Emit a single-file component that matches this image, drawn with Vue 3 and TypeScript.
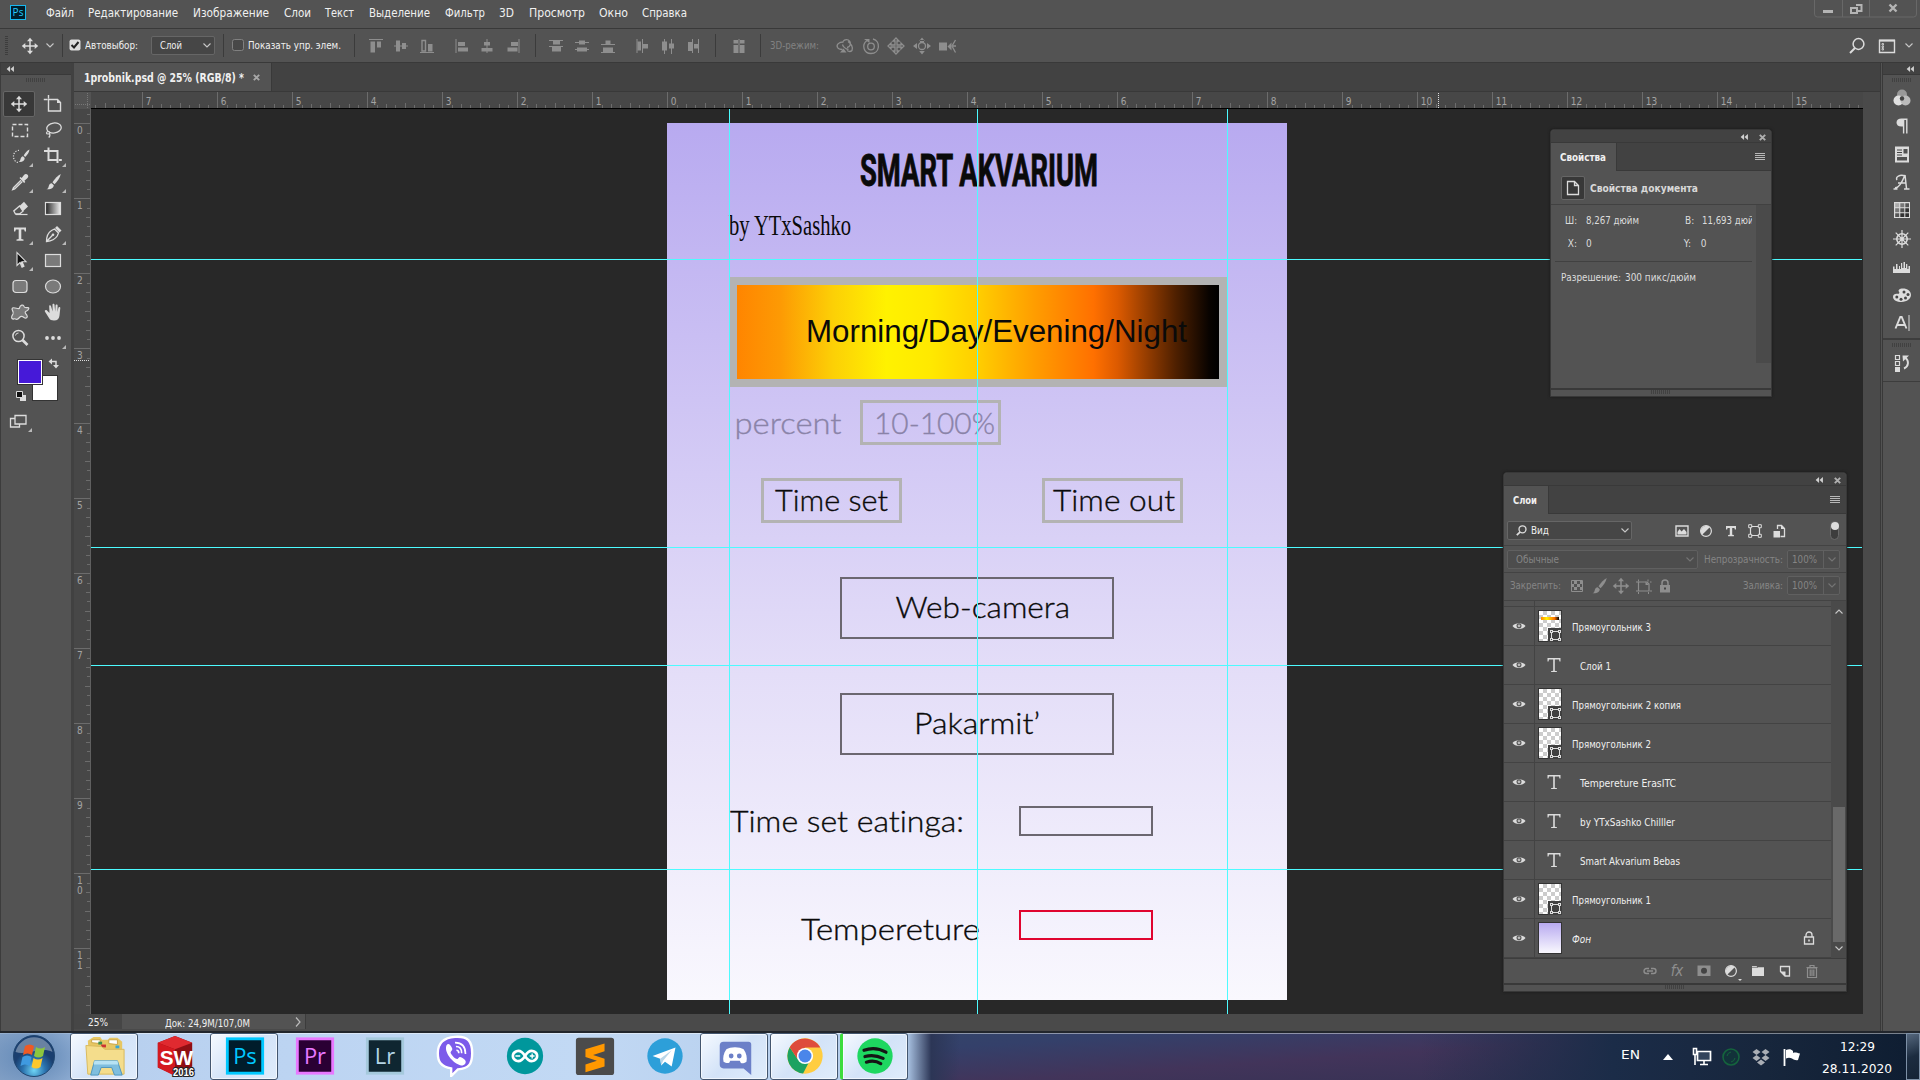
<script setup lang="ts">
interface Item { t: string; w: number; g: number }
interface Layer { name: string; kind: 'shape' | 'text' | 'back'; w: number; band?: boolean }

// Squeezes or stretches a label to a given width in px.
const vFit = {
  mounted(el: HTMLElement, b: { value: number }) {
    const natural = el.getBoundingClientRect().width
    if (!natural) return
    el.style.transform = `scaleX(${b.value / natural})`
    el.style.marginRight = `${b.value - natural}px`
  },
}

const menu: Item[] = [
  { t: 'Файл', w: 28, g: 20 }, { t: 'Редактирование', w: 90, g: 14 }, { t: 'Изображение', w: 76, g: 15 },
  { t: 'Слои', w: 27, g: 15 }, { t: 'Текст', w: 29, g: 14 }, { t: 'Выделение', w: 61, g: 15 },
  { t: 'Фильтр', w: 40, g: 15 }, { t: '3D', w: 15, g: 14 }, { t: 'Просмотр', w: 56, g: 15 },
  { t: 'Окно', w: 29, g: 14 }, { t: 'Справка', w: 45, g: 14 },
]

const L = '#dcdcdc'
const G = '#8e8e8e'
const shapeBox = (c: string) =>
  `<path d="M5.5 5.5h9v9h-9z" fill="none" stroke="${c}" stroke-width="1.2"/><path d="M3.7 3.7h3v3h-3zM13.3 3.7h3v3h-3zM3.7 13.3h3v3h-3zM13.3 13.3h3v3h-3z" fill="#535353" stroke="${c}"/>`
const move = (c: string) =>
  `<path d="M10 3v14M3 10h14" stroke="${c}" stroke-width="1.5"/><path d="M10 1.8L7 5.3h6zM10 18.2L7 14.7h6zM1.8 10L5.3 7v6zM18.2 10L14.7 7v6z" fill="${c}"/>`
const brush = (c: string) =>
  `<path d="M17.8 2c-3 1.600-6.500 5.200-8.300 8.300l2 2C14.400 9.600 17 5.600 17.800 2z" fill="${c}"/><path d="M8.700 11.200l2.100 2.100c-.3 3-3.800 4.600-7.300 3.900 1.800-.8 1.900-1.600 2.300-3.300.3-1.500 1.500-2.700 2.900-2.700z" fill="${c}"/>`
const serifT = (c: string) =>
  `<path d="M4 3.500h12v4h-1.200l-.7-2.100h-2.800v9.600l2.200.5v1.200h-7v-1.200l2.200-.5V5.400H5.900l-.7 2.100H4z" fill="${c}"/>`
const fx3 = (d: string) => `<path d="${d}" fill="none" stroke="${G}" stroke-width="1.3"/>`

const icons: Record<string, string> = {
  move: move(L),
  moveGrey: move(G),
  artboard: `<path d="M5.500 5.500h9l3 3v8.500H5.500zM4.500 5.500H.8M5.500 4.500V1" fill="none" stroke="${L}" stroke-width="1.400"/><path d="M14 5v4h4z" fill="${L}"/>`,
  marquee: `<rect x="2.500" y="4.500" width="15" height="12" fill="none" stroke="${L}" stroke-width="1.400" stroke-dasharray="4 2"/>`,
  lasso: `<ellipse cx="11" cy="8" rx="7.300" ry="5" fill="none" stroke="${L}" stroke-width="1.300" transform="rotate(-8 11 8)"/><path d="M5 11.500c-2 .5-2 2.500 0 2.500s2.500-2 .500-2.500M6.500 13.500c.8 1.500.3 3-.8 4" fill="none" stroke="${L}" stroke-width="1.200"/>`,
  quick: `<path d="M9 4.500a5 6 0 1 0-1 12" fill="none" stroke="${L}" stroke-width="1.200" stroke-dasharray="1.200 1.400"/><path d="M19.500 3.500c-2.500 1-4.500 3.500-5.800 6l1.500 1.500c2.300-2 4-4.800 4.300-7.500zM13 10.300l1.700 1.700c0 2.800-2.700 4.500-6 4 1.600-.8 1.500-1.900 2-3.400.4-1.300 1.200-2.300 2.300-2.300z" fill="${L}"/>`,
  crop: `<path d="M5.500 1.500v12.500H15M1 5h13.500v12" fill="none" stroke="${L}" stroke-width="2"/><path d="M15.800 13h3v2h-3z" fill="${L}"/>`,
  dropper: `<path d="M11 8.200l-7.500 7.500-.8 2 2-.8L12.300 9.500" fill="none" stroke="${L}" stroke-width="1.300"/><path d="M9.500 6l1-1 1.200 1 2.300-3c1.200-1.300 2.800-1 3.600-.2s1 2.400-.3 3.500l-2.900 2.400.9 1.200-1.200 1.200z" fill="${L}"/>`,
  brush: brush(L),
  brushGrey: brush(G),
  eraser: `<path d="M9.500 8L14 3.800l4 4.700-5 4.700z" fill="${L}"/><path d="M9.500 8l-5.700 5 1.700 3h4l3.500-2.800z" fill="none" stroke="${L}" stroke-width="1.300"/><path d="M6 16.500h11.500" stroke="${L}" stroke-width="1.200"/>`,
  gradient: `<defs><linearGradient id="tg"><stop stop-color="#222"/><stop offset="1" stop-color="#eee"/></linearGradient></defs><rect x="2.500" y="4.500" width="15" height="12" fill="url(#tg)" stroke="${L}" stroke-width="1.200"/>`,
  type: serifT(L),
  pen: `<path d="M3.500 17.500c0-5 1-8.500 5-11l3-1.500 4 4-1.300 3c-2.500 4-5.700 5-10.700 5.500zM4 17l5.500-5.800" fill="none" stroke="${L}" stroke-width="1.300"/><circle cx="10" cy="10.800" r="1.300" fill="${L}"/><path d="M12 4l2-2 4.500 4.500-2 2z" fill="${L}"/>`,
  arrow: `<path d="M7 2.500v13l3-3 2 4.800 2-1-2-4.600h4z" fill="#111" stroke="${L}" stroke-width="1.100"/><path d="M10.200 12.500l2 4.800 2-1-2-4.600z" fill="${L}"/>`,
  rect: `<rect x="2.500" y="4.500" width="15" height="12" fill="#7a7a7a" stroke="${L}" stroke-width="1.200"/>`,
  round: `<rect x="3" y="4.500" width="14" height="12" rx="3" fill="#7a7a7a" stroke="${L}" stroke-width="1.200"/>`,
  ellipse: `<ellipse cx="10" cy="10.500" rx="7.500" ry="6.500" fill="#7a7a7a" stroke="${L}" stroke-width="1.200"/>`,
  blob: `<path d="M9.500 6c.5-3 4-4 4.500-1.500.3 1.600 2 1.200 4 1 1.500 0 .8 2.500-1.500 3.500-2.500 1-1 2.500.500 4.500 1 2-1 3.500-3 2s-3-1.800-4.500 0-2.500 2.500-4 1.500-2 1-3.500-.5c-1-1.500 0-3 1-4.500C4.500 9.500.500 7.500 2.500 6c2-1.200 6.500 2 7 0z" fill="#7a7a7a" stroke="${L}" stroke-width="1.200"/>`,
  hand: `<path d="M6.500 11L4 8.500c-1.300-1-2.800 0-2 1.200l4 6.300c1 1.800 2.500 2.500 5 2.500 3.500 0 5.300-2 5.500-5l.8-7.500c0-1.300-1.600-1.400-1.900-.2L14.500 10l.1-6.500c0-1.300-1.900-1.300-2 0L12.200 9.500 11.500 2.800c-.1-1.400-2-1.300-2 0l.1 6.700L8 4c-.4-1.300-2.100-.9-1.800.4z" fill="${L}"/>`,
  zoom: `<circle cx="8.500" cy="8" r="5.600" fill="none" stroke="${L}" stroke-width="1.500"/><path d="M5.500 7.500a3 3 0 0 1 3-2.500" fill="none" stroke="${L}"/><path d="M12.500 12l5 5" stroke="${L}" stroke-width="2.600"/>`,
  dots: `<circle cx="4" cy="10" r="1.900" fill="${L}"/><circle cx="10" cy="10" r="1.900" fill="${L}"/><circle cx="16" cy="10" r="1.900" fill="${L}"/>`,
  screen: `<path d="M2.500 7.500h9v8.500h-9z" fill="none" stroke="${L}" stroke-width="1.300"/><path d="M7 4.500h11v8.500H7z" fill="#535353" stroke="${L}" stroke-width="1.300"/>`,
  aTop: `<path d="M3 3.500h14" stroke="${G}"/><path d="M4.500 5.500h4.500v11H4.500zM11 5.500h4v6h-4z" fill="${G}"/>`,
  aMid: `<path d="M3 10h14" stroke="${G}"/><path d="M5 4.500h4v11H5zM11 7h4v6h-4z" fill="${G}"/>`,
  aBot: `<path d="M3 16.500h14" stroke="${G}"/><path d="M5 4.500h3.500V15H5z" fill="none" stroke="${G}" stroke-width="1.400"/><path d="M11 8h4.500v7.500H11z" fill="${G}"/>`,
  aLeft: `<path d="M4 3v14" stroke="${G}"/><path d="M6 6h7v4H6zM6 11.500h10v4H6z" fill="${G}"/>`,
  aCen: `<path d="M10 3v14" stroke="${G}"/><path d="M7 6h6v3.500H7zM4.500 12h11v3.500h-11z" fill="${G}"/>`,
  aRight: `<path d="M16 3v14" stroke="${G}"/><path d="M8 6h7v4H8zM4.500 11.500h10v4h-10z" fill="${G}"/>`,
  dTop: `<path d="M3 4.500h14M3 10.500h14" stroke="${G}"/><path d="M7 5h7v3.500H7zM6 11h9v4.500H6z" fill="${G}"/>`,
  dMid: `<path d="M3 6.500h14M3 13.500h14" stroke="${G}"/><path d="M7 4.500h6V8.500H7zM5 11.500h10v4H5z" fill="${G}"/>`,
  dBot: `<path d="M3 8.500h14M3 16.500h14" stroke="${G}"/><path d="M7.500 4.500h5v4h-5zM5 11.500h10V16H5z" fill="${G}"/>`,
  dLeft: `<path d="M5 3v14M10.500 3v14" stroke="${G}"/><path d="M5.500 5.500h3.500v9H5.500zM11 8h5v4.500h-5z" fill="${G}"/>`,
  dCen: `<path d="M6.500 3v15M13.500 3v15" stroke="${G}"/><path d="M4 5.500h5v9H4zM11 7.500h5v5h-5z" fill="${G}"/>`,
  dRight: `<path d="M9.500 3v14M15.500 3v14" stroke="${G}"/><path d="M5 6h4v9H5zM11 8h4v4.500h-4z" fill="${G}"/>`,
  auto: `<path d="M10 3v14" stroke="${G}"/><path d="M4.500 4H9v3.500H4.500zM11 4h4.500v3.500H11zM4.500 9H9v8H4.500zM11 9h4.500v8H11z" fill="${G}"/>`,
  o3: fx3('M8 5.500a4 4 0 1 1 4 6M8.500 6C4 6 1 8.500 2.500 11.500c1 1.800 3 2 5 2M13 5.500c3 2 5.500 6 4 9-1.500 1.500-3.500 1-5 0M7.500 8.500c.5 2 3 4.500 6 5') + `<path d="M5 16.500l3.500-4 3 4z" fill="${G}"/>`,
  roll: fx3('M6 4.500C0 9 3 17.500 10 17.500c9 0 10-12.500 2-14.500') + `<circle cx="10" cy="10.500" r="3.300" fill="none" stroke="${G}" stroke-width="1.300"/><path d="M3 3h5.500v4z" fill="${G}"/>`,
  pan: fx3('M10 2l3 3h-2v4h4V7l3 3-3 3v-2h-4v4h2l-3 3-3-3h2v-4H5v2l-3-3 3-3v2h4V5H7z'),
  slide: `<circle cx="10" cy="10" r="3.500" fill="none" stroke="${G}" stroke-width="1.300"/><path d="M10 1.500L7.200 5h5.600zM8 4h4v2.500H8zM10 18.500L7.200 15h5.600zM1 10l4-3v6zM19 10l-4-3v6z" fill="${G}"/>`,
  cam: `<path d="M2 6.500h8v8H2zM10.500 10.500l4-4v8z" fill="${G}"/>` + fx3('M18.500 4l-3.500 6 3.500 6.500M16 10h3'),
  search: `<circle cx="11.500" cy="8" r="5.400" fill="none" stroke="${L}" stroke-width="1.500"/><path d="M8 12l-5 5" stroke="${L}" stroke-width="2"/>`,
  work: `<path d="M2.500 4.500h15v12h-15z" fill="none" stroke="${L}" stroke-width="1.400"/><path d="M2 3.500h16v2H2z" fill="${L}"/><path d="M5 7.500h1.500v1.500H5zM5 10h1.500v1.500H5zM5 12.500h1.500v1.500H5z" fill="none" stroke="${L}" stroke-width=".8"/>`,
  spheres: `<circle cx="10" cy="6.500" r="5" fill="#999"/><circle cx="6.500" cy="12.500" r="5" fill="#e0e0e0"/><circle cx="13.500" cy="12.500" r="5" fill="#bbb"/><circle cx="10" cy="10.500" r="2.200" fill="#444"/>`,
  para: `<path d="M9.500 2.500H15.500V17.500h-1.400V4h-1.800v13.500h-1.400v-7C6.500 11 4.500 9 4.500 6.500s2-4 5-4z" fill="${L}"/>`,
  news: `<path d="M3 2.500h14v16H3z" fill="${L}"/><path d="M5 6h5M5 8.500h5M5 11h5" stroke="#444"/><path d="M11.500 5h4v4.500h-4zM5 13h10v3.500H5z" fill="#535353"/>`,
  scriptA: `<path d="M3 15.500c3 1 7-5 10-12.500l1.500 13.500M13 4C8 2 3 5 5 8M6 11h8M1.500 17h4M12 17h5.500" fill="none" stroke="${L}" stroke-width="1.500"/>`,
  swatches: `<path d="M2 2h16v16H2z" fill="${L}"/><path d="M3.200 3.200h4v4h-4z" fill="#aaa"/><path d="M8.300 3.200h4v4h-4zM3.200 8.300h4v4h-4z" fill="#777"/><path d="M13.300 3.200h3.700v4h-3.700zM8.300 8.300h4v4h-4zM3.200 13.300h4v3.700h-4z" fill="#555"/><path d="M13.300 8.300h3.700v4h-3.700zM8.300 13.300h4v3.700h-4zM13.300 13.300h3.700v3.700h-3.700z" fill="#333"/>`,
  wheel: `<circle cx="10" cy="10" r="5.200" fill="none" stroke="${L}" stroke-width="1.600"/><circle cx="10" cy="10" r="1.800" fill="${L}"/><path d="M10 1v18M1 10h18M3.700 3.700l12.600 12.600M16.300 3.700L3.700 16.300" stroke="${L}" stroke-width="1.200"/>`,
  histo: `<path d="M1 16V9.500h1.500V12H4V7h1.500v5H7V9h1v3h1V6h1.200v5h1.300V5H13v6h1V7h1.300v5h1.200V9H18v7z" fill="${L}"/>`,
  palette: `<path d="M10.500 3.500C15 3.300 19 6 19 9.800S15 17 9.500 17C5 17 1 15 1 12c0-2.500 2-3.500 4.500-3.200 2 .2 2.300-1 1.300-2.300-1-1.500 1-2.900 3.700-3z" fill="${L}"/><g fill="#444"><circle cx="4.800" cy="12" r="1.500"/><circle cx="9" cy="14.200" r="1.500"/><circle cx="13.500" cy="13" r="1.500"/><circle cx="16" cy="9.500" r="1.500"/><circle cx="12" cy="7" r="1.500"/></g>`,
  charA: `<path d="M3.500 15.500L8.300 4h1.400l4.800 11.500M5.500 12h7" fill="none" stroke="${L}" stroke-width="1.900"/><path d="M17 2v16" stroke="${L}"/>`,
  history: `<path d="M3.500 2.500h4v4h-4zM3.500 8.500h4v4h-4z" fill="none" stroke="${L}" stroke-width="1.200"/><path d="M3 14h5v5H3z" fill="${L}"/><path d="M12 15.500c5-2 5-8 1.500-10.500" fill="none" stroke="${L}" stroke-width="1.900"/><path d="M10.500 2.500H17L11 8.500z" fill="${L}"/>`,
  doc: `<path d="M4.500 3.500h7l4 4v9h-11zM11.500 3.500v4h4" fill="none" stroke="${L}" stroke-width="1.300"/>`,
  eye: `<path d="M3.500 10C6 6.200 14 6.200 16.500 10 14 13.800 6 13.800 3.500 10z" fill="${L}"/><circle cx="10" cy="9.800" r="2.500" fill="#535353"/><circle cx="10" cy="9.800" r="1.400" fill="#bbb"/>`,
  pic: `<path d="M4 5h12v10H4z" fill="none" stroke="${L}" stroke-width="1.400"/><path d="M5.500 13.500V11l2-3 2 2.500L12 8l2.500 3v2.500z" fill="${L}"/>`,
  adjust: `<circle cx="10" cy="10" r="5.400" fill="none" stroke="${L}" stroke-width="1.200"/><path d="M13.800 6.200A5.400 5.400 0 0 0 6.200 13.800z" fill="${L}"/>`,
  smallT: `<path d="M5 5h10v3.500h-1.200l-.4-1.500h-2.200v6.800l1.700.3v1.200H7.100v-1.200l1.700-.3V7H6.600l-.4 1.500H5z" fill="${L}"/>`,
  shape: shapeBox(L),
  smart: `<path d="M8.500 8V4.500h4l3 3v8h-4" fill="none" stroke="${L}" stroke-width="1.300"/><path d="M12 4v4h4zM4.500 10h6.500v6.500H4.500z" fill="${L}"/>`,
  checker: `<path d="M4.500 4.500h11v11h-11z" fill="none" stroke="${G}"/><path d="M7 5h3v3H7zM13 5h2.500v3H13zM4.500 8H7v3H4.500zM10 8h3v3h-3zM7 11h3v3H7zM13 11h2.500v3H13z" fill="${G}"/>`,
  frame: `<path d="M5.500 6h8.500l2 2v7H5.500z" fill="none" stroke="${G}" stroke-width="1.200"/><path d="M3 6h2M5.500 3.500v2M15 3.500v2M17 15h2M3 15h2M5.500 16v2M15.500 16v2M17 6h1.500" stroke="${G}"/><path d="M12.500 5.500v3.500H16z" fill="${G}"/>`,
  lock: `<path d="M5 9h10v7.500H5z" fill="${G}"/><path d="M7 9V7a3 3 0 0 1 6 0v2" fill="none" stroke="${G}" stroke-width="1.500"/><path d="M9 11.500h2v2H9z" fill="#444"/>`,
  lockLine: `<path d="M5.500 9h9v7h-9z" fill="none" stroke="${L}" stroke-width="1.300"/><path d="M7 9V7a3 3 0 0 1 6 0v2" fill="none" stroke="${L}" stroke-width="1.300"/><path d="M9.200 11.500h1.600v2H9.200z" fill="${L}"/>`,
  link: `<path d="M9 7.500H6.500a2.500 2.500 0 0 0 0 5H9M11 7.500h2.500a2.500 2.500 0 0 1 0 5H11M7 10h6" fill="none" stroke="${G}" stroke-width="1.400"/>`,
  mask: `<path d="M3.500 4.500h13v10.500h-13z" fill="${G}"/><circle cx="10" cy="9.700" r="3" fill="#444"/>`,
  folder: `<path d="M4 5h4.500l1 1.200H16V15H4z" fill="${L}"/><path d="M4 6.300h6" stroke="#535353" stroke-width=".7"/>`,
  newLayer: `<path d="M5.500 5.500h9v9.500H10L5.500 10.500z" fill="none" stroke="${L}" stroke-width="1.300"/><path d="M5 10.500h5.500V15.500z" fill="${L}"/>`,
  trash: `<path d="M5.500 7h9v9.500h-9zM4.500 6.500h11M8 6V4.500h4V6M8.200 8.500v6.500M10 8.500v6.500M11.800 8.500v6.500" fill="none" stroke="${G}" stroke-width="1.200"/>`,
}

const alignGroups: string[][] = [['aTop', 'aMid', 'aBot'], ['aLeft', 'aCen', 'aRight']]
const distGroups: string[][] = [['dTop', 'dMid', 'dBot'], ['dLeft', 'dCen', 'dRight']]
const modes = ['o3', 'roll', 'pan', 'slide', 'cam']
const tools: [string, boolean][] = [
  ['move', false], ['artboard', false], ['marquee', false], ['lasso', false], ['quick', true], ['crop', true],
  ['dropper', true], ['brush', true], ['eraser', false], ['gradient', false], ['type', true], ['pen', true],
  ['arrow', true], ['rect', false], ['round', false], ['ellipse', false], ['blob', false], ['hand', false],
  ['zoom', false], ['dots', true],
]
const dock = ['spheres', 'para', 'news', 'scriptA', 'swatches', 'wheel', 'histo', 'palette', 'charA']

// Rulers: one inch is 75 px at 25% zoom, with eighth-inch ticks.
const originX = 593.3
const originY = 15.300
const hTicks: { x: number; h: number }[] = []
for (let i = -63; i < 130; i++) {
  const x = originX + i * 9.375
  if (x > 17 && x < 1788) hTicks.push({ x: Math.round(x), h: i % 8 === 0 ? 16 : i % 4 === 0 ? 5 : i % 2 === 0 ? 4 : 3 })
}
const hLabels = Array.from({ length: 23 }, (_, i) => i - 7).map((n) => ({ n: Math.abs(n), x: originX + n * 75 + 3.5 }))
const vTicks: { y: number; h: number }[] = []
for (let i = -1; i < 96; i++) {
  const y = originY + i * 9.375
  if (y < 905) vTicks.push({ y: Math.round(y), h: i % 8 === 0 ? 16 : i % 4 === 0 ? 5 : i % 2 === 0 ? 4 : 3 })
}
const vLabels = Array.from({ length: 12 }, (_, n) => ({ d: String(n).split(''), y: originY + n * 75 }))

const guidesX = [638, 886, 1136]
const guidesY = [150, 438, 556, 760]
const texts = [
  { t: 'percent', x: 643.5, y: 325, w: 107, c: '#8a83a8' },
  { t: '10-100%', x: 783, y: 325, w: 121, c: '#8a83a8' },
  { t: 'Time set', x: 684, y: 401.5, w: 113, c: '#0a0a0a' },
  { t: 'Time out', x: 962, y: 401.5, w: 122, c: '#0a0a0a' },
  { t: 'Web-camera', x: 804.5, y: 509, w: 174.5, c: '#0a0a0a' },
  { t: 'Pakarmit’', x: 823, y: 625, w: 126, c: '#0a0a0a' },
  { t: 'Time set eatinga:', x: 639, y: 722.5, w: 234, c: '#0a0a0a' },
  { t: 'Tempereture', x: 710, y: 830.5, w: 179, c: '#0a0a0a' },
]
const boxes = [
  { x: 770.5, y: 292.500, w: 138, h: 42, c: '#b3b3b3', s: 3 },
  { x: 671.5, y: 370.500, w: 138, h: 42, c: '#b3b3b3', s: 3 },
  { x: 952.5, y: 370.500, w: 138, h: 42, c: '#b3b3b3', s: 3 },
  { x: 750, y: 469, w: 272, h: 60, c: '#6b6770', s: 2 },
  { x: 750, y: 585, w: 272, h: 60, c: '#6b6770', s: 2 },
  { x: 929, y: 698, w: 132, h: 28, c: '#6b6770', s: 2 },
  { x: 929, y: 802, w: 132, h: 28, c: '#e0052f', s: 2 },
]

const layers: Layer[] = [
  { name: 'Прямоугольник 3', kind: 'shape', w: 79, band: true },
  { name: 'Слой 1', kind: 'text', w: 31 },
  { name: 'Прямоугольник 2 копия', kind: 'shape', w: 109 },
  { name: 'Прямоугольник 2', kind: 'shape', w: 79 },
  { name: 'Tempereture ErasITC', kind: 'text', w: 96 },
  { name: 'by YTxSashko Chilller', kind: 'text', w: 95 },
  { name: 'Smart Akvarium Bebas', kind: 'text', w: 100 },
  { name: 'Прямоугольник 1', kind: 'shape', w: 79 },
  { name: 'Фон', kind: 'back', w: 19 },
]
const filters = ['pic', 'adjust', 'smallT', 'shape', 'smart']
const locks = ['checker', 'brushGrey', 'moveGrey', 'frame', 'lock']

const sq = (bg: string, edge: string) =>
  `<rect x="5.500" y="4" width="37" height="36" fill="${bg}" stroke="${edge}" stroke-width="3"/>`
const apps: { svg: string; label?: string; color?: string; open?: boolean; play?: boolean }[] = [
  { open: true, svg: '<path d="M6 6l6-4h7l2 3h6l2-2h8l5 4v28H8z" fill="#e7c763"/><path d="M10 8V5h9v4zM28 9V5h9v5z" fill="#fff" stroke="#c9a545"/><path d="M17 7h4v3h-4z" fill="#3b8f4b"/><path d="M20 10h5v3h-5z" fill="#c33"/><path d="M35 11h4v3h-4z" fill="#37a6d8"/><path d="M4 11l16 1 4 3h20v26H6z" fill="#f4dd8c" stroke="#d8b95b"/><path d="M9 42l4-15h24l5 15h-8l-3-8H20l-3 8z" fill="#7fbede" stroke="#4c94bd"/><path d="M13 27h24l1 4H12z" fill="#b7e2f3"/>' },
  { svg: '<path d="M6 8L24 1l18 7v25L26 43 6 34z" fill="#8f0f14"/><path d="M6 8L24 1l18 7-18 7z" fill="#e02a30"/><path d="M24 15v28L6 34V8z" fill="#d41920"/><text x="8" y="31" font-size="22" font-weight="700" fill="#fff" font-family="Liberation Sans" textLength="35" lengthAdjust="spacingAndGlyphs">SW</text><text x="22" y="43" font-size="10.5" font-weight="700" fill="#fff" stroke="#222" stroke-width="2.500" paint-order="stroke" font-family="Liberation Sans" textLength="22" lengthAdjust="spacingAndGlyphs">2016</text>' },
  { open: true, svg: sq('#001d2b', '#00c8ff'), label: 'Ps', color: '#00c8ff' },
  { svg: sq('#2a0034', '#e878ff'), label: 'Pr', color: '#e878ff' },
  { svg: sq('#0f2631', '#a5c9dc'), label: 'Lr', color: '#b4d5e6' },
  { svg: '<path d="M24 2C38 1 42 7 42 19S38 35 27 36l-7 7v-8C9 33 6 28 6 19S10 3 24 2z" fill="#7c5bea" stroke="#fff" stroke-width="2.500"/><path d="M15 11c2-3 4-1 6 3 1 3-3 3-1 6s5 6 7 5c2-3 3-2 6 0 4 3 2 6-1 7C24 32 12 19 15 11z" fill="#fff"/><path d="M24 8c8 0 11 5 11 12M25 12c5 0 6 4 6 7M25.500 16c2 0 2.500 1 2.500 3" fill="none" stroke="#fff" stroke-width="1.700"/>' },
  { svg: '<circle cx="24" cy="22" r="19" fill="#00979c"/><path d="M24 22c-3-5-6-6-9-5-5 2-5 8 0 10 3 1 6 0 9-5 3-5 6-6 9-5 5 2 5 8 0 10-3 1-6 0-9-5z" fill="none" stroke="#fff" stroke-width="2.700"/><path d="M14 22h5M29 22h5M31.500 19.500v5" stroke="#fff" stroke-width="1.400"/>' },
  { svg: '<rect x="4" y="3" width="40" height="39" rx="3" fill="#4b4b4b"/><path d="M34 9v8l-12 4 12 4v8L14 39v-8l12-4-12-4v-8z" fill="#ff9800"/>' },
  { svg: '<circle cx="24" cy="22" r="18.500" fill="#2d9fd9"/><path d="M11 22l24-9-4 20-7-5-4 4-1-7z" fill="#fff"/><path d="M19 25l12-9-9 11-2 5z" fill="#b9d6e8"/>' },
  { open: true, svg: '<path d="M12 7h26q3 0 3 3v32l-8-7H12q-4 0-4-4V11q0-4 4-4z" fill="#6c80c8"/><path d="M15 15c4-3 14-3 18 0 3 4 4 9 3 13-3 2-5 2-6 1l-1-2H19l-1 2c-2 1-4 0-6-1-1-4 0-9 3-13z" fill="#fff"/><circle cx="20" cy="22" r="2.500" fill="#6c80c8"/><circle cx="28.500" cy="22" r="2.500" fill="#6c80c8"/>' },
  { open: true, svg: '<circle cx="24" cy="22" r="18.500" fill="#ffcd40"/><path d="M8 12.800A18.500 18.500 0 0 0 22 40.400l8-15.400-6-3-8 3z" fill="#1ca261"/><path d="M24 13h16A18.500 18.500 0 0 0 8 12.800L16 25z" fill="#de4b3c"/><circle cx="24" cy="22" r="8.500" fill="#fff"/><circle cx="24" cy="22" r="6.800" fill="#4a86ea"/>' },
  { open: true, play: true, svg: '<circle cx="24" cy="22" r="18.500" fill="#1ed760"/><path d="M12.500 16c8-3 16-2 23 2M13.500 22.500c7-2 13-1 19 2M15 28.500c6-2 11-1 15 1.500" fill="none" stroke="#151515" stroke-width="3.400" stroke-linecap="round"/>' },
]
</script>

<template>
  <div class="screen">
    <header class="menubar">
      <div class="pslogo"><span>Ps</span></div>
      <span v-for="m in menu" :key="m.t" v-fit="m.w" class="fit" :style="{ marginLeft: m.g + 'px' }">{{ m.t }}</span>
      <div class="winbtns">
        <svg width="104" height="19" viewBox="0 0 104 19">
          <path d="M.5 0v15q0 3 3 3h96q3 0 3-3V0M28.500 0v18M55.500 0v18" fill="none" stroke="#686868" />
          <path d="M9 11h10v3H9z" fill="#b4b4b4" />
          <path d="M42 6h5.500v6H44M37 9h6v5h-6z" fill="none" stroke="#b4b4b4" stroke-width="2" />
          <path d="M75.500 5.500l7 7M82.500 5.500l-7 7" stroke="#b4b4b4" stroke-width="2.400" />
        </svg>
      </div>
    </header>

    <div class="options">
      <i class="vgrip"></i>
      <svg class="ic opmove" viewBox="0 0 20 20" v-html="icons.move"></svg>
      <svg class="chev opchev" viewBox="0 0 8 5"><path d="M.5.500L4 4 7.500.500" /></svg>
      <i class="sep s1"></i>
      <svg class="chk on" viewBox="0 0 12 12"><rect x=".5" y=".5" width="11" height="11" rx="2" fill="#dcdcdc" /><path d="M2.500 6l2.500 2.500L9.500 3" fill="none" stroke="#222" stroke-width="2" /></svg>
      <span v-fit="53" class="fit auto">Автовыбор:</span>
      <div class="drop opdrop"><span v-fit="22" class="fit">Слой</span><svg class="chev" viewBox="0 0 8 5"><path d="M.5.500L4 4 7.500.500" /></svg></div>
      <i class="sep s2"></i>
      <svg class="chk off" viewBox="0 0 12 12"><rect x=".5" y=".5" width="11" height="11" rx="2" fill="#484848" stroke="#808080" /></svg>
      <span v-fit="93" class="fit show">Показать упр. элем.</span>
      <i class="sep s3"></i>
      <div v-for="(g, i) in alignGroups" :key="'a' + i" class="group"><div v-for="n in g" :key="n" class="slot"><svg class="ic" viewBox="0 0 20 20" v-html="icons[n]"></svg></div></div>
      <i class="sep s4"></i>
      <div v-for="(g, i) in distGroups" :key="'d' + i" class="group"><div v-for="n in g" :key="n" class="slot"><svg class="ic" viewBox="0 0 20 20" v-html="icons[n]"></svg></div></div>
      <i class="sep s5"></i>
      <svg class="ic opauto" viewBox="0 0 20 20" v-html="icons.auto"></svg>
      <i class="sep s6"></i>
      <span v-fit="49" class="fit mode">3D-режим:</span>
      <div class="group modes"><div v-for="n in modes" :key="n" class="slot"><svg class="ic" viewBox="0 0 20 20" v-html="icons[n]"></svg></div></div>
      <div class="opright">
        <svg class="ic" viewBox="0 0 20 20" v-html="icons.search"></svg>
        <svg class="ic" viewBox="0 0 20 20" v-html="icons.work"></svg>
        <svg class="chev" viewBox="0 0 8 5"><path d="M.5.500L4 4 7.500.500" /></svg>
      </div>
    </div>

    <main class="main">
      <aside class="toolbox">
        <div class="colhead"><svg class="dbl" viewBox="0 0 9 7"><path d="M4 0v7L0 3.500zM8.500 0v7l-4-3.500z" /></svg></div>
        <i class="grip"></i>
        <div class="tools">
          <div v-for="([n, sub], i) in tools" :key="n" class="tool" :class="{ active: i === 0 }">
            <svg class="ic" viewBox="0 0 20 20" v-html="icons[n]"></svg><b v-if="sub" class="sub"></b>
          </div>
        </div>
        <svg class="colors" width="70" height="52" viewBox="0 0 70 52">
          <rect x="31.500" y="17.500" width="25" height="25" fill="#fff" stroke="#333" />
          <rect x="16.500" y="1.500" width="25" height="25" fill="#fff" stroke="#333" />
          <rect x="18" y="3" width="22" height="22" fill="#4619d8" />
          <path d="M50 3.500h5v5" fill="none" stroke="#dcdcdc" stroke-width="1.500" /><path d="M51 .5v6l-3.500-3zM52 7h6l-3 3.500z" fill="#dcdcdc" />
          <path d="M19 37h6v6h-6z" fill="#dcdcdc" /><path d="M15.500 33.500h6v6h-6z" fill="#111" stroke="#dcdcdc" />
        </svg>
        <div class="tool scr"><svg class="ic" viewBox="0 0 20 20" v-html="icons.screen"></svg><b class="sub"></b></div>
      </aside>

      <section class="docarea">
        <div class="tabs">
          <div class="tab"><span v-fit="160" class="fit">1probnik.psd @ 25% (RGB/8) *</span><svg width="7" height="7" viewBox="0 0 7 7"><path d="M.8.800l5.400 5.400M6.200.800L.8 6.200" stroke="#a8a8a8" stroke-width="1.900" /></svg></div>
        </div>
        <div class="view">
          <div class="viewmain">
            <svg class="hruler" width="1789" height="17" viewBox="0 0 1789 17">
              <rect width="17" height="17" fill="#535353" />
              <path d="M13.500 1v15M1 12.500h15" stroke="#777" stroke-dasharray="1 1" />
              <path v-for="t in hTicks" :key="t.x" :d="`M${t.x + 0.5} 16v-${t.h}`" stroke="#6c6c6c" />
              <text v-for="l in hLabels" :key="l.x" :x="l.x" y="12.500" class="rt">{{ l.n }}</text>
              <path d="M1364.500 1v15" stroke="#ddd" stroke-dasharray="1 1" />
              <path d="M17 16.500h1772" stroke="#000" />
            </svg>
            <div class="viewrow">
              <svg class="vruler" width="17" height="905" viewBox="0 0 17 905">
                <path v-for="t in vTicks" :key="t.y" :d="`M16 ${t.y - 0.5}h-${t.h}`" stroke="#6c6c6c" />
                <g v-for="l in vLabels" :key="l.y">
                  <text v-for="(d, k) in l.d" :key="k" x="3" :y="l.y + 10 + k * 10" class="rt">{{ d }}</text>
                </g>
                <path d="M0 251.500h16" stroke="#ddd" stroke-dasharray="1 1" />
                <path d="M16.500 0v905" stroke="#5f5f5f" />
              </svg>
              <svg class="canvas" width="1772" height="905" viewBox="0 0 1772 905">
                <defs>
                  <linearGradient id="paper" x2="0" y2="1"><stop stop-color="#b8aaf0" /><stop offset=".4" stop-color="#d4cbf5" /><stop offset=".63" stop-color="#e4def8" /><stop offset="1" stop-color="#f9f8fe" /></linearGradient>
                  <linearGradient id="day"><stop stop-color="#ff8500" /><stop offset=".09" stop-color="#fd9a04" /><stop offset=".2" stop-color="#fcd006" /><stop offset=".31" stop-color="#fff200" /><stop offset=".4" stop-color="#ffe900" /><stop offset=".5" stop-color="#ffce00" /><stop offset=".62" stop-color="#ff9c00" /><stop offset=".74" stop-color="#ff7000" /><stop offset=".79" stop-color="#dc5a00" /><stop offset=".91" stop-color="#4f2000" /><stop offset=".98" stop-color="#080300" /><stop offset="1" stop-color="#000" /></linearGradient>
                </defs>
                <rect width="1772" height="905" fill="#282828" />
                <rect x="576" y="14" width="620" height="877" fill="url(#paper)" />
                <rect x="639" y="168" width="497" height="110" fill="#b3b3b3" />
                <rect x="646" y="176" width="482" height="94" fill="url(#day)" />
                <rect v-for="(b, i) in boxes" :key="i" :x="b.x" :y="b.y" :width="b.w" :height="b.h" fill="none" :stroke="b.c" :stroke-width="b.s" />
                <text class="title" x="769" y="76.500" textLength="238" lengthAdjust="spacingAndGlyphs">SMART AKVARIUM</text>
                <text class="hand" x="638" y="125.500" textLength="122" lengthAdjust="spacingAndGlyphs">by YTxSashko</text>
                <text class="arial" x="715" y="233" textLength="381" lengthAdjust="spacingAndGlyphs">Morning/Day/Evening/Night</text>
                <text v-for="t in texts" :key="t.t" class="eras" :x="t.x" :y="t.y" :fill="t.c" :stroke="t.c" :textLength="t.w" lengthAdjust="spacingAndGlyphs">{{ t.t }}</text>
                <path v-for="g in guidesX" :key="g" :d="`M${g + 0.5} 0v905`" stroke="#4dfbff" />
                <path v-for="g in guidesY" :key="g" :d="`M0 ${g + 0.5}h1771`" stroke="#4dfbff" />
              </svg>
            </div>
          </div>
          <div class="vscroll"></div>
        </div>
        <div class="status">
          <div class="zoomval"><span v-fit="20" class="fit">25%</span></div>
          <div class="docsize"><span v-fit="85" class="fit">Док: 24,9М/107,0М</span><svg width="6" height="10" viewBox="0 0 6 10"><path d="M1 .5L5 5 1 9.500" fill="none" stroke="#bbb" stroke-width="1.200" /></svg></div>
        </div>
      </section>

      <aside class="dock">
        <div class="colhead right"><svg class="dbl" viewBox="0 0 9 7"><path d="M4 0v7L0 3.500zM8.500 0v7l-4-3.500z" /></svg></div>
        <i class="grip"></i>
        <div class="dockicons"><div v-for="n in dock" :key="n"><svg class="ic" viewBox="0 0 20 20" v-html="icons[n]"></svg></div></div>
        <div class="dock2"><i class="grip"></i><svg class="ic" viewBox="0 0 20 20" v-html="icons.history"></svg></div>
      </aside>
    </main>

    <section class="panel props">
      <div class="phead"><svg class="dbl" viewBox="0 0 9 7"><path d="M4 0v7L0 3.500zM8.500 0v7l-4-3.500z" /></svg><svg class="px" viewBox="0 0 7 7"><path d="M.8.800l5.400 5.400M6.200.800L.8 6.200" /></svg></div>
      <div class="ptabs"><div class="ptab pt1"><span v-fit="46" class="fit">Свойства</span></div><svg class="burger" viewBox="0 0 10 8"><path d="M0 .5h10M0 2.500h10M0 4.500h10M0 6.500h10" /></svg></div>
      <div class="pdoc"><div class="pbtn"><svg class="ic" viewBox="0 0 20 20" v-html="icons.doc"></svg></div><span v-fit="108" class="fit strong">Свойства документа</span></div>
      <div class="pbody">
        <div class="pmain">
          <div class="prow"><span class="k"><span v-fit="12" class="fit">Ш:</span></span><span v-fit="53" class="fit">8,267 дюйм</span><span class="k2">В:</span><span class="cut"><span v-fit="58" class="fit">11,693 дюйм</span></span></div>
          <div class="prow"><span class="k">X:</span><span>0</span><span class="k2 y">Y:</span><span>0</span></div>
          <div class="pres"><span v-fit="60" class="fit">Разрешение:</span><span v-fit="71" class="fit res">300 пикс/дюйм</span></div>
        </div>
        <div class="pscroll"></div>
      </div>
      <div class="pfoot"><i class="grip"></i></div>
    </section>

    <section class="panel layers">
      <div class="phead"><svg class="dbl" viewBox="0 0 9 7"><path d="M4 0v7L0 3.500zM8.500 0v7l-4-3.500z" /></svg><svg class="px" viewBox="0 0 7 7"><path d="M.8.800l5.400 5.400M6.200.800L.8 6.200" /></svg></div>
      <div class="ptabs"><div class="ptab pt2"><span v-fit="24" class="fit">Слои</span></div><svg class="burger" viewBox="0 0 10 8"><path d="M0 .5h10M0 2.500h10M0 4.500h10M0 6.500h10" /></svg></div>
      <div class="lrow filter">
        <div class="drop kind"><svg width="11" height="11" viewBox="0 0 11 11"><circle cx="6.500" cy="4.300" r="3.500" fill="none" stroke="#dcdcdc" stroke-width="1.300" /><path d="M4.200 6.800L.8 10.200" stroke="#dcdcdc" stroke-width="1.700" /></svg><span v-fit="18" class="fit">Вид</span><svg class="chev" viewBox="0 0 8 5"><path d="M.5.500L4 4 7.500.500" /></svg></div>
        <div class="ficons"><svg v-for="n in filters" :key="n" class="ic" viewBox="0 0 20 20" v-html="icons[n]"></svg></div>
        <div class="toggle"><i></i></div>
      </div>
      <div class="lrow blend dim">
        <div class="drop normal"><span v-fit="43" class="fit">Обычные</span><svg class="chev" viewBox="0 0 8 5"><path d="M.5.500L4 4 7.500.500" /></svg></div>
        <span v-fit="79" class="fit op">Непрозрачность:</span>
        <div class="drop pct"><span v-fit="25" class="fit">100%</span><i></i><svg class="chev" viewBox="0 0 8 5"><path d="M.5.500L4 4 7.500.500" /></svg></div>
      </div>
      <div class="lrow locks dim">
        <span v-fit="51" class="fit">Закрепить:</span>
        <div class="licons"><svg v-for="n in locks" :key="n" class="ic" viewBox="0 0 20 20" v-html="icons[n]"></svg></div>
        <span v-fit="40" class="fit fill">Заливка:</span>
        <div class="drop pct"><span v-fit="25" class="fit">100%</span><i></i><svg class="chev" viewBox="0 0 8 5"><path d="M.5.500L4 4 7.500.500" /></svg></div>
      </div>
      <div class="list">
        <div class="rows">
          <div class="layer stub"><div class="eye"></div></div>
          <div v-for="l in layers" :key="l.name" class="layer">
            <div class="eye"><svg class="ic" viewBox="0 0 20 20" v-html="icons.eye"></svg></div>
            <svg v-if="l.kind === 'text'" class="tthumb" viewBox="0 0 20 20"><path d="M3.500 3h13v3.500h-1l-.5-1.900h-4.200v11.200l2.200.4v.9h-6v-.9l2.200-.4V4.600H5L4.500 6.500h-1z" fill="#dcdcdc" /></svg>
            <div v-else class="thumb" :class="l.kind">
              <i v-if="l.band" class="band"></i>
              <svg v-if="l.kind === 'shape'" class="badge" viewBox="0 0 14 14"><rect width="14" height="14" fill="#404040" /><path d="M3.500 3.500h8v8h-8z" fill="none" stroke="#dcdcdc" /><path d="M2 2h3v3H2zM10 2h3v3h-3zM2 10h3v3H2zM10 10h3v3h-3z" fill="#dcdcdc" /><path d="M3 3h1v1H3zM11 3h1v1h-1zM3 11h1v1H3zM11 11h1v1h-1z" fill="#404040" /></svg>
            </div>
            <span v-fit="l.w" class="fit lname" :class="l.kind">{{ l.name }}</span>
            <svg v-if="l.kind === 'back'" class="ic llock" viewBox="0 0 20 20" v-html="icons.lockLine"></svg>
          </div>
        </div>
        <div class="lscroll">
          <svg class="chev" viewBox="0 0 8 5"><path d="M.5 4.500L4 1l3.500 3.500" /></svg>
          <i></i>
          <svg class="chev" viewBox="0 0 8 5"><path d="M.5.500L4 4 7.500.500" /></svg>
        </div>
      </div>
      <div class="lfoot">
        <svg class="ic" viewBox="0 0 20 20" v-html="icons.link"></svg>
        <span class="fx">fx</span>
        <svg class="ic" viewBox="0 0 20 20" v-html="icons.mask"></svg>
        <svg class="ic adj" viewBox="0 0 20 20"><g v-html="icons.adjust"></g><path d="M17 18h4l-2 2z" fill="#dcdcdc" /></svg>
        <svg class="ic" viewBox="0 0 20 20" v-html="icons.folder"></svg>
        <svg class="ic" viewBox="0 0 20 20" v-html="icons.newLayer"></svg>
        <svg class="ic" viewBox="0 0 20 20" v-html="icons.trash"></svg>
      </div>
      <div class="pfoot"><i class="grip"></i></div>
    </section>

    <footer class="taskbar">
      <div class="start">
        <svg width="46" height="46" viewBox="0 0 46 46">
          <defs><radialGradient id="orb" cy=".85"><stop stop-color="#6fd4f5" /><stop offset=".55" stop-color="#2a72ae" /><stop offset="1" stop-color="#1a3f70" /></radialGradient></defs>
          <circle cx="23" cy="23" r="20.500" fill="url(#orb)" stroke="#20456f" />
          <path d="M4.500 19a19 19 0 0 1 37 0C30 13 16 23 4.500 19z" fill="#fff" opacity=".35" />
          <path d="M14 13c3-2 6-2 9 0l-2 9c-3-2-6-2-9 0z" fill="#ee5a24" /><path d="M25 14c3 2 6 2 9 0l-2 9c-3 2-6 2-9 0z" fill="#8cc63e" />
          <path d="M11.500 24c3-2 6-2 9 0l-2 9c-3-2-6-2-9 0z" fill="#3f9ae0" /><path d="M22.500 25c3 2 6 2 9 0l-2 9c-3 2-6 2-9 0z" fill="#fcc82d" />
        </svg>
      </div>
      <div class="apps">
        <div v-for="(a, i) in apps" :key="i" class="app" :class="{ open: a.open, play: a.play }">
          <svg width="44" height="42" viewBox="1 0 46 44"><g v-html="a.svg"></g><text v-if="a.label" x="24" y="30" text-anchor="middle" font-size="23" :fill="a.color" font-family="Open Sans">{{ a.label }}</text></svg>
        </div>
      </div>
      <div class="tray">
        <span v-fit="19" class="fit lang">EN</span>
        <svg class="up" width="10" height="6" viewBox="0 0 10 6"><path d="M5 0l5 6H0z" fill="#fff" /></svg>
        <svg class="net" width="20" height="20" viewBox="0 0 20 20"><path d="M5.500 4.500h13v9h-13z" fill="#33445c" stroke="#fff" stroke-width="1.700" /><path d="M1.500 1.500h3v6h-3zM3 8v10M8 17.500h8M12 14v3" fill="none" stroke="#fff" stroke-width="1.600" /></svg>
        <svg class="ring" width="20" height="20" viewBox="0 0 20 20"><circle cx="10" cy="10" r="8" fill="#12323a" stroke="#15643d" stroke-width="1.600" /><path d="M6 9a5 5 0 0 1 4-4M14 11a5 5 0 0 1-4 4" fill="none" stroke="#15643d" /></svg>
        <svg class="dbx" width="20" height="18" viewBox="0 0 20 18"><path d="M5.500 1l4 3-4 3-4-3zM14.500 1l4 3-4 3-4-3zM5.500 7l4 3-4 3-4-3zM14.500 7l4 3-4 3-4-3zM10 11.500l4 3-4 3-4-3z" fill="#aaaeb5" /></svg>
        <svg class="flag" width="20" height="20" viewBox="0 0 20 20"><path d="M2.500 2v17" stroke="#fff" stroke-width="1.800" /><path d="M4 3c3-1 5-1 7 1v2c2-1 4 0 7 .5L16 13c-2 .5-4 0-6-1.500-2-1-4-1-6 0z" fill="#fff" /></svg>
        <div class="clock"><span v-fit="35" class="fit">12:29</span><span v-fit="70" class="fit">28.11.2020</span></div>
        <div class="peek"></div>
      </div>
    </footer>
  </div>
</template>

<style>
body { margin: 0; overflow: hidden; background: #282828; }
</style>

<style scoped>
.screen { position: relative; width: 1920px; height: 1080px; display: flex; flex-direction: column; background: #535353; color: #f0f0f0; font: 11px 'DejaVu Sans Condensed', 'DejaVu Sans', sans-serif; overflow: hidden; }
.screen * { box-sizing: border-box; }
.screen svg { display: block; flex: none; }
.fit { display: inline-block; flex: none; white-space: nowrap; transform-origin: 0 50%; }
.ic { width: 20px; height: 20px; overflow: visible; }
.chev { width: 8px; height: 5px; fill: none; stroke: #c8c8c8; stroke-width: 1.100; overflow: visible; }
.dbl { width: 9px; height: 6px; fill: #d0d0d0; }
.grip { display: block; width: 20px; height: 4px; background: repeating-linear-gradient(90deg, #414141 0 1px, transparent 1px 2px); }

.menubar { height: 28px; flex: none; display: flex; align-items: center; padding: 0 0 3px 10px; font-size: 12px; }
.pslogo { width: 16px; height: 15px; background: #001d2b; border: 1px solid #18b8f0; color: #26c9ff; font: 10px/12px 'Open Sans', sans-serif; text-align: center; }
.winbtns { margin: -9px 2px 0 auto; }
.options { height: 35px; flex: none; border-top: 1px solid #393939; border-bottom: 1px solid #393939; display: flex; align-items: center; }
.vgrip { width: 3px; height: 19px; margin-left: 5px; background: repeating-linear-gradient(#3d3d3d 0 1px, transparent 1px 2px); }
.opmove { margin-left: 12px; }
.opchev { margin-left: 6px; }
.sep { width: 1px; height: 23px; background: #3b3b3b; flex: none; }
.s1 { margin-left: 8px; }
.chk { width: 12px; height: 12px; }
.on { margin: -2px 4px 0 6px; }
.off { margin: -2px 4px 0 8px; }
.drop { display: flex; align-items: center; background: #464646; border: 1px solid #666; border-radius: 2px; height: 19px; flex: none; }
.opdrop { width: 64px; margin-left: 13px; padding-left: 8px; }
.opdrop .chev { margin-left: 21px; }
.s2 { margin-left: 8px; }
.s3 { margin: 0 8px 0 13px; }
.group { display: flex; margin-right: 9px; }
.slot { width: 25.600px; display: flex; justify-content: center; }
.s4 { margin-right: 8px; }
.s5 { margin-right: 13px; }
.s6 { margin: 0 9px 0 11px; }
.mode { color: #828282; }
.modes { margin-left: 13px; }
.opright { margin: 0 7px 0 auto; display: flex; align-items: center; gap: 10px; }
.opright .chev { margin-left: -2px; }

.main { height: 968px; flex: none; display: flex; background: #535353; }
.toolbox { width: 74px; flex: none; border-left: 1px solid #3c3c3c; border-right: 3px solid #414141; }
.colhead { height: 12px; background: #424242; border-bottom: 1px solid #393939; padding: 3px 0 0 5px; }
.toolbox .grip { margin: 3px 0 0 25px; }
.tools { display: grid; grid-template-columns: 33px 33px; grid-auto-rows: 26px; margin: 9px 0 0 2px; }
.tool { position: relative; display: flex; align-items: center; justify-content: center; }
.active { background: #383838; border: 1px solid #666; border-radius: 2px; width: 32px; height: 26px; }
.sub { position: absolute; right: 3px; bottom: 2px; border: 2px solid; border-color: transparent #b9b9b9 #b9b9b9 transparent; }
.colors { margin-top: 7px; }
.scr { width: 34px; height: 26px; margin-top: -2px; }

.docarea { width: 1807px; flex: none; display: flex; flex-direction: column; background: #4a4a4a; border-right: 1px solid #393939; }
.tabs { height: 29px; background: #424242; border-bottom: 1px solid #393939; display: flex; }
.tab { width: 198px; height: 28px; background: #535353; display: flex; align-items: center; padding: 2px 0 0 10px; font-weight: 700; font-size: 11.500px; border-right: 1px solid #393939; }
.tab svg { margin: -2px 0 0 9px; }
.view { display: flex; height: 922px; }
.viewmain { width: 1789px; }
.hruler, .vruler { background: #474747; }
.viewrow { display: flex; }
.rt { font: 10px 'DejaVu Sans Condensed', 'DejaVu Sans', sans-serif; fill: #a3a3a3; }
.canvas { overflow: hidden; }
.title { font: 700 44px Roboto, sans-serif; fill: #0a0a0a; stroke: #0a0a0a; stroke-width: .9; }
.hand { font: 29px 'Liberation Serif', serif; fill: #0a0a0a; }
.arial { font: 31px 'Liberation Sans', sans-serif; fill: #0a0a0a; }
.eras { font: 300 29.500px Lato, sans-serif; font-variant-ligatures: none; stroke-width: .35; }
.vscroll { flex: 1; background: #4a4a4a; }
.status { height: 17px; display: flex; }
.zoomval { width: 48px; height: 15px; background: #464646; padding: 2px 0 0 14px; }
.docsize { width: 184px; height: 15px; background: #535353; display: flex; align-items: center; padding: 4px 0 0 43px; border-right: 1px solid #3c3c3c; }
.docsize svg { margin-left: 45px; margin-top: -3px; }

.dock { flex: 1; border-left: 1px solid #393939; margin-left: 1px; }
.right { padding-left: 23px; }
.dock > .grip { margin: 3px 0 0 9px; }
.dockicons { margin-top: 2px; padding-left: 9px; height: 256px; border-bottom: 2px solid #3d3d3d; }
.dockicons > div { height: 28.100px; display: flex; align-items: center; }
.dock2 { height: 42px; border-bottom: 1px solid #3d3d3d; padding: 3px 0 0 9px; }
.dock2 .ic { margin-top: 6px; }

.panel { position: absolute; background: #535353; border: 1px solid #383838; border-radius: 4px 4px 0 0; box-shadow: 0 0 3px #1a1a1a; font-size: 10px; }
.props { left: 1550px; top: 129px; width: 222px; height: 268px; }
.phead { height: 13px; background: #424242; border-bottom: 1px solid #393939; display: flex; align-items: center; justify-content: flex-end; padding: 2px 5px 0 0; border-radius: 4px 4px 0 0; }
.px { width: 7px; height: 7px; margin-left: 10px; stroke: #b0b0b0; stroke-width: 1.900; }
.ptabs { height: 28px; background: #424242; border-bottom: 1px solid #393939; display: flex; justify-content: space-between; }
.ptab { height: 28px; background: #535353; display: flex; align-items: center; font-weight: 700; border-right: 1px solid #393939; padding-left: 9px; }
.pt1 { width: 66px; }
.pt2 { width: 45px; }
.burger { width: 10px; height: 8px; margin: 10px 6px 0 0; stroke: #b8b8b8; }
.pdoc { height: 34px; border-bottom: 1px solid #414141; display: flex; align-items: center; padding-left: 10px; }
.pbtn { width: 24px; height: 24px; background: #383838; border: 1px solid #666; border-radius: 2px; margin-right: 5px; display: flex; align-items: center; justify-content: center; }
.strong { font-weight: 700; color: #d8d8d8; margin-top: 2px; }
.pbody { display: flex; height: 183px; color: #dcdcdc; }
.pmain { width: 201px; margin: 0 0 0 4px; padding-top: 4px; }
.prow { display: flex; align-items: center; height: 23px; }
.k { width: 23px; margin-right: 8px; display: flex; justify-content: flex-end; padding-right: 1px; }
.k2 { width: 17px; margin-left: 46px; }
.k2.y { margin-left: 92px; }
.cut { width: 50px; overflow: hidden; }
.pres { border-top: 1px solid #414141; width: 197px; margin-top: 6px; padding: 10px 0 0 6px; display: flex; }
.res { margin-left: 4px; }
.pscroll { width: 15px; height: 158px; background: #4a4a4a; }
.pfoot { height: 8px; border-top: 2px solid #393939; display: flex; justify-content: center; }

.layers { left: 1503px; top: 472px; width: 344px; height: 520px; }
.lrow { display: flex; align-items: center; padding-left: 3px; border-bottom: 1px solid #434343; }
.filter { height: 32px; padding-top: 2px; }
.blend { height: 27px; }
.locks { height: 28px; padding-bottom: 2px; }
.kind { width: 125px; padding-left: 8px; gap: 4px; }
.kind .chev { margin-left: 68px; }
.ficons { display: flex; gap: 4.300px; margin-left: 40px; }
.toggle { width: 9px; height: 19px; margin-left: 41px; border-radius: 5px; background: #3d3d3d; border: 1px solid #6a6a6a; }
.toggle i { display: block; width: 8px; height: 8px; border-radius: 50%; background: #dcdcdc; }
.dim { color: #858585; }
.dim .drop { background: #4d4d4d; border-color: #606060; }
.dim .chev { stroke: #757575; }
.normal { width: 191px; padding-left: 8px; }
.normal .chev { margin-left: 127px; }
.op { margin-left: 6px; }
.pct { width: 53px; margin-left: 4px; padding-left: 4px; }
.pct i { width: 1px; height: 17px; background: #606060; margin-left: 6px; }
.pct .chev { margin-left: 4px; }
.locks { padding-left: 6px; }
.licons { display: flex; gap: 2.200px; margin-left: 5.500px; }
.fill { margin-left: 67.500px; }
.list { display: flex; height: 357px; }
.rows { width: 327px; }
.layer { height: 39px; display: flex; align-items: center; border-bottom: 1px solid #434343; }
.stub { height: 6px; }
.eye { width: 31px; align-self: stretch; border-right: 1px solid #434343; display: flex; align-items: center; padding-left: 5px; }
.thumb { position: relative; width: 24px; height: 32px; margin-left: 3px; border: 1px solid #333; background: conic-gradient(#ccc 25%, #fff 0 50%, #ccc 0 75%, #fff 0) 0 0 / 8px 8px; }
.thumb.back { background: linear-gradient(#b8aaf0, #f9f8fe); }
.band { position: absolute; left: 2px; top: 6px; width: 18px; height: 3px; background: linear-gradient(90deg, #ff8500, #fff200 32%, #ff7200 74%, #000); }
.badge { position: absolute; right: -1px; bottom: -1px; width: 14px; height: 14px; }
.tthumb { width: 20px; height: 20px; margin-left: 9px; }
.lname { margin: 3px 0 0 10px; }
.lname.text { margin-left: 16px; }
.lname.back { font-style: italic; }
.llock { margin-left: 208px; }
.lscroll { flex: 1; background: #4a4a4a; display: flex; flex-direction: column; align-items: center; padding-top: 8px; }
.lscroll i { width: 12px; height: 135px; margin: 193px 0 4px; background: #696969; }
.lfoot { height: 25px; border-top: 1px solid #3d3d3d; display: flex; align-items: center; padding-left: 136px; gap: 7px; }
.fx { width: 20px; text-align: center; font: italic 15px 'DejaVu Sans Condensed', sans-serif; color: #8e8e8e; }

.taskbar { position: relative; height: 49px; flex: none; border-top: 2px solid #22262c; display: flex; color: #fff; background: radial-gradient(ellipse 90px 60px at 34px 24px, #5f86b5, transparent), linear-gradient(#ffffff70 0 1px, transparent 1px), linear-gradient(90deg, #9db4d2 0, #b7cfee 5%, #bcd4f2 15%, #c2d9f4 30%, #b4cdec 44%, #a6bfdf 47.300%, #2c3656 48.500%, transparent 50%), linear-gradient(90deg, transparent 74%, #1b2c48 84%, #17263c 92%, #0e1d31), linear-gradient(176deg, #33496a 0 22%, #34406a 45%, #42345a 65%, #2d3050); }
.start { width: 72px; padding: 0 0 0 11px; }
.apps { display: flex; width: 838px; gap: 2px; }
.app { width: 68px; height: 47px; display: flex; justify-content: center; padding: 2px 0 0 2px; }
.app.open { border: 1px solid #43566f; border-radius: 3px; background: linear-gradient(135deg, #f6faff, #d3e3f8 50%, #dfecfb); box-shadow: inset 0 0 0 1px #ffffffa0; padding-top: 1px; }
.app.play { border-left: 3px solid #3ddc3d; padding-left: 0; }
.tray { flex: 1; display: flex; align-items: center; padding-left: 713px; }
.lang { font-size: 13px; margin-top: -4px; }
.up { margin-left: 23px; }
.net { margin-left: 19px; }
.ring { margin-left: 9px; }
.dbx { margin-left: 10px; }
.flag { margin-left: 11px; }
.clock { width: 70px; margin: 2px 0 0 20px; display: flex; flex-direction: column; align-items: flex-start; font-size: 13px; line-height: 22px; }
.clock .fit:first-child { margin-left: 18px; }
.peek { width: 14px; height: 47px; margin-left: 14px; border: 1px solid #7d90a6; background: linear-gradient(160deg, #55677d, #1c2c40 50%, #152335); }
</style>
